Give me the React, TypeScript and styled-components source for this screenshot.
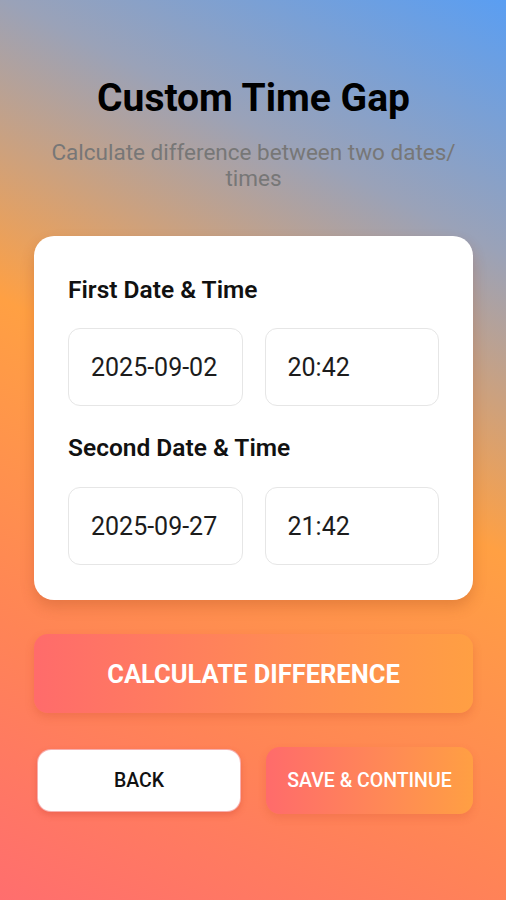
import React from "react";
import styled, { createGlobalStyle } from "styled-components";

const Global = createGlobalStyle`
  html, body { margin: 0; padding: 0; }
  body { font-family: Roboto, "Noto Sans", "Liberation Sans", sans-serif; }
  * { box-sizing: border-box; }
`;

const Page = styled.div`
  width: 506px;
  height: 900px;
  overflow: hidden;
  background: linear-gradient(207deg, #5a9ef2 0%, #9aa2b8 22%, #ffa043 48%, #ff8456 76%, #ff6e6e 100%);
  display: flex;
  flex-direction: column;
  padding: 76px 33px 0 34px;
`;

const Title = styled.h1`
  margin: 0;
  text-align: center;
  font-size: 39px;
  line-height: 44px;
  font-weight: 700;
  color: #000;
`;

const Subtitle = styled.p`
  margin: 19px 0 0;
  text-align: center;
  font-size: 22.5px;
  line-height: 26px;
  color: #777;
  padding: 0 6px;
`;

const Card = styled.div`
  margin-top: 45px;
  background: #fff;
  border-radius: 20px;
  padding: 39px 34px 35px;
  display: flex;
  flex-direction: column;
  box-shadow: 0 7px 14px rgba(150, 60, 20, 0.24);
`;

const SectionLabel = styled.div<{ $top?: number }>`
  font-size: 24.5px;
  line-height: 30px;
  font-weight: 600;
  color: #111;
  margin-top: ${(p) => p.$top ?? 0}px;
`;

const Row = styled.div<{ $top: number }>`
  display: grid;
  grid-template-columns: 1fr 1fr;
  gap: 22px;
  margin-top: ${(p) => p.$top}px;
`;

const Field = styled.div`
  height: 78px;
  border: 1px solid #e6e6e6;
  border-radius: 12px;
  display: flex;
  align-items: center;
  padding-left: 22px;
  font-size: 25px;
  color: #1c1c1c;
`;

const PrimaryButton = styled.button`
  margin-top: 34px;
  height: 79px;
  border: none;
  border-radius: 14px;
  background: linear-gradient(90deg, #ff6b6b 0%, #ff8a55 55%, #ff9f43 100%);
  color: #fff;
  font-family: inherit;
  font-size: 25.5px;
  font-weight: 700;
  box-shadow: 0 4px 8px rgba(200, 70, 40, 0.25);
`;

const ButtonRow = styled.div`
  display: grid;
  grid-template-columns: 1fr 1fr;
  gap: 25px;
  margin-top: 34px;
  align-items: center;
`;

const BackButton = styled.button`
  height: 63px;
  margin: 0 0 0 3px;
  background: #fff;
  border: 1px solid rgba(240, 95, 95, 0.5);
  border-radius: 14px;
  color: #111;
  font-family: inherit;
  font-size: 19.5px;
  font-weight: 500;
  box-shadow: 0 3px 6px rgba(200, 60, 40, 0.3);
`;

const SaveButton = styled.button`
  height: 67px;
  border: none;
  border-radius: 14px;
  background: linear-gradient(90deg, #ff6b6b 0%, #ff8a55 60%, #ff9f43 100%);
  color: #fff;
  font-family: inherit;
  font-size: 19.5px;
  font-weight: 500;
  box-shadow: 0 4px 8px rgba(200, 70, 40, 0.2);
`;

export default function App() {
  return (
    <>
      <Global />
      <Page>
        <Title>Custom Time Gap</Title>
        <Subtitle>Calculate difference between two dates/ times</Subtitle>
        <Card>
          <SectionLabel>First Date &amp; Time</SectionLabel>
          <Row $top={23}>
            <Field>2025-09-02</Field>
            <Field>20:42</Field>
          </Row>
          <SectionLabel $top={27}>Second Date &amp; Time</SectionLabel>
          <Row $top={24}>
            <Field>2025-09-27</Field>
            <Field>21:42</Field>
          </Row>
        </Card>
        <PrimaryButton>CALCULATE DIFFERENCE</PrimaryButton>
        <ButtonRow>
          <BackButton>BACK</BackButton>
          <SaveButton>SAVE &amp; CONTINUE</SaveButton>
        </ButtonRow>
      </Page>
    </>
  );
}
